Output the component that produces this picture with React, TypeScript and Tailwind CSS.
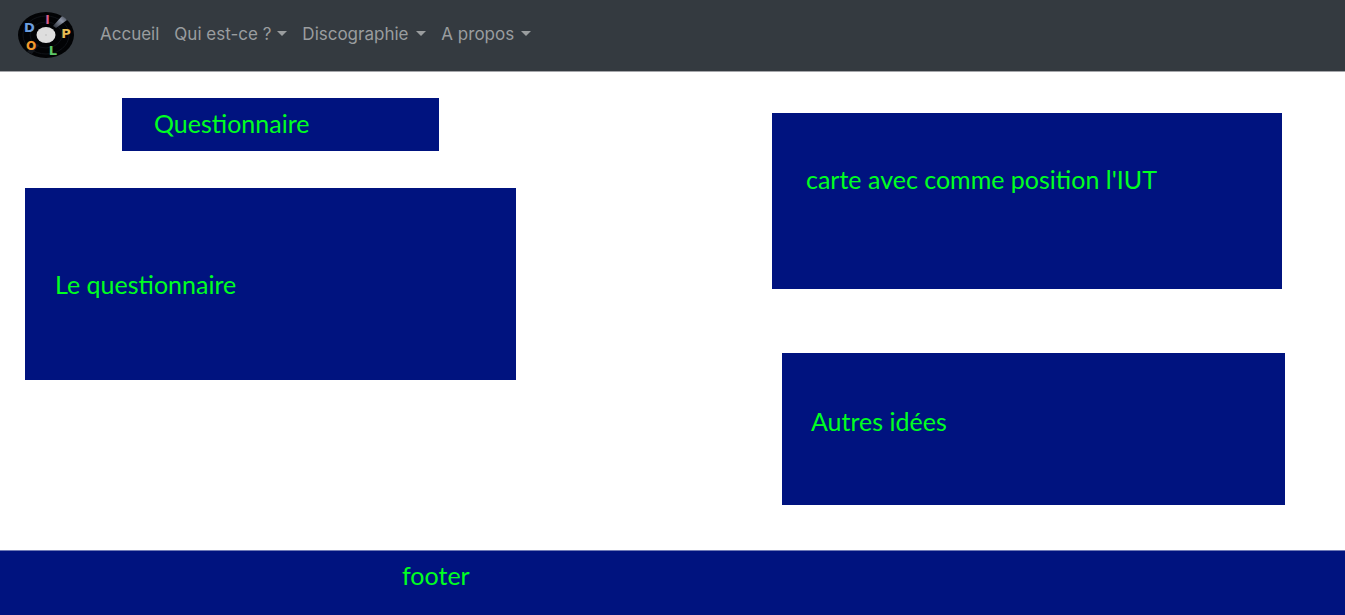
const menus = [
  { label: "Qui est-ce ?", width: "min-w-[113px]" },
  { label: "Discographie", width: "min-w-[124px]" },
  { label: "A propos", width: "min-w-[90px]" },
];

function Logo() {
  return (
    <svg viewBox="0 0 56 48" className="h-12 w-14" role="img" aria-label="DIPLO">
      <defs>
        <linearGradient id="shine" x1="0" y1="1" x2="1" y2="0">
          <stop offset="0" stopColor="#20242c" />
          <stop offset="0.6" stopColor="#8d95a6" />
          <stop offset="1" stopColor="#3c414b" />
        </linearGradient>
      </defs>
      <ellipse cx="28" cy="24" rx="28" ry="23" fill="#020305" />
      <ellipse cx="28" cy="24" rx="23" ry="19" fill="none" stroke="#101318" />
      <ellipse cx="28" cy="24" rx="16" ry="13" fill="none" stroke="#0d1015" />
      <path d="M35 15 L44 5 Q48 7 49 9 L38 17 Z" fill="url(#shine)" />
      <path d="M17 32 L9 41 L14 43 L21 34 Z" fill="#14171d" />
      <ellipse cx="28" cy="24" rx="9.5" ry="8" fill="#dedede" />
      <circle cx="28" cy="24" r="0.8" fill="#bbb" />
      <g fontFamily="DejaVu Sans, sans-serif" fontWeight="700" fontSize="13" textAnchor="middle">
        <text x="11.5" y="21" fill="#6c9fe0">D</text>
        <text x="29.5" y="13" fontSize="12" fill="#d85b8d">I</text>
        <text x="48" y="27" fill="#e6bd53">P</text>
        <text x="35" y="44" fill="#5dc767">L</text>
        <text x="13" y="39" fontSize="12" fill="#f39a2b">O</text>
      </g>
    </svg>
  );
}

export default function App() {
  return (
    <div className="flex min-h-screen flex-col bg-white font-['Lato',sans-serif] text-[25px] leading-8 text-[#00ff21]">
      <header className="flex h-[72px] items-center border-b border-[#a5a6aa] bg-[#343a40] px-[18px] pb-0.5">
        <a href="#accueil" className="shrink-0">
          <Logo />
        </a>
        <nav className="ml-[26px] flex gap-[15px] pb-0.5 font-['Inter',sans-serif] text-[17px] leading-6 whitespace-nowrap text-[#9a9d9f]">
          <a href="#accueil" className="min-w-[58px]">Accueil</a>
          {menus.map((menu) => (
            <button key={menu.label} type="button" className={`flex items-center justify-between ${menu.width}`}>
              {menu.label}
              <svg viewBox="0 0 10 5" className="h-[5px] w-2.5" fill="currentColor" aria-hidden="true">
                <path d="M0 0H10L5 5Z" />
              </svg>
            </button>
          ))}
        </nav>
      </header>

      <main className="grid flex-1 grid-cols-[491fr_513fr] items-start gap-x-64 pr-[60px] pb-11 pl-[25px]">
        <div className="pt-[26px]">
          <h1 className="mr-[77px] ml-[97px] min-h-[53px] bg-[#00137f] px-8 pt-[9px]">Questionnaire</h1>
          <section className="mt-[37px] flex min-h-48 items-center bg-[#00137f] px-[30px]">
            <p>Le questionnaire</p>
          </section>
        </div>
        <div className="pt-[41px]">
          <section className="mr-[3px] min-h-44 bg-[#00137f] px-[34px] pt-[50px]">
            <p>carte avec comme position l'IUT</p>
          </section>
          <section className="mt-16 ml-2.5 min-h-[152px] bg-[#00137f] px-[29px] pt-[52px]">
            <p>Autres idées</p>
          </section>
        </div>
      </main>

      <footer className="min-h-[65px] border-t border-[#6f7ab5] bg-[#00137f] pt-2 pl-[402px]">
        <p>footer</p>
      </footer>
    </div>
  );
}
